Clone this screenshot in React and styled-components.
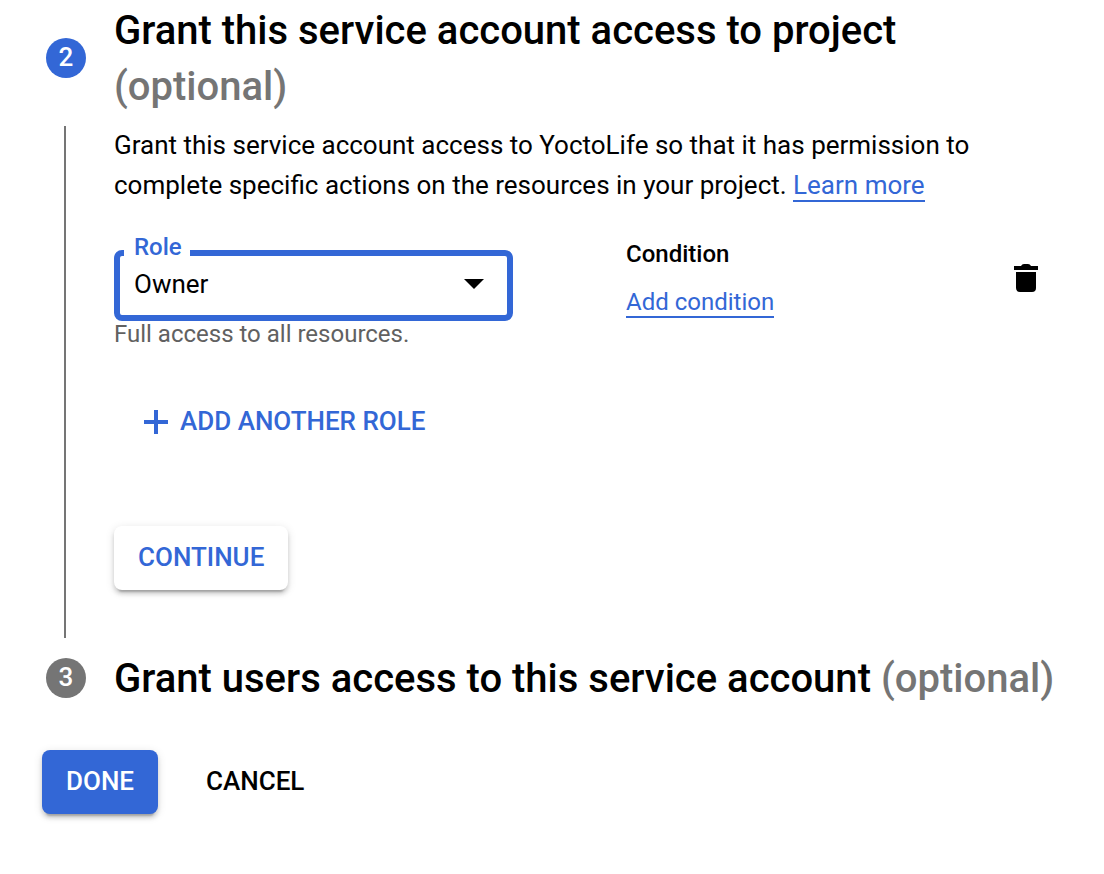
import React, { useState } from 'react';
import styled, { createGlobalStyle } from 'styled-components';

const App = () => {
  const [role, setRole] = useState('Owner')

  return (
    <>
      <GlobalStyle />
      <Wrapper>
        <Step>
          <Rail>
            <StepNumber $active>2</StepNumber>
            <RailLine />
          </Rail>
          <StepBody>
            <Title>
              Grant this service account access to project <Optional>(optional)</Optional>
            </Title>
            <Description>
              Grant this service account access to YoctoLife so that it has permission to
              complete specific actions on the resources in your project. <Link href="#learn">Learn more</Link>
            </Description>

            <RoleRow>
              <RoleField>
                <SelectBox>
                  <SelectLabel htmlFor="role">Role</SelectLabel>
                  <Select id="role" value={role} onChange={(e) => setRole(e.target.value)}>
                    <option>Owner</option>
                    <option>Editor</option>
                    <option>Viewer</option>
                  </Select>
                  <Arrow viewBox="0 0 20 10" aria-hidden="true">
                    <path d="M0 0h20L10 10z" />
                  </Arrow>
                </SelectBox>
                <Hint>Full access to all resources.</Hint>
              </RoleField>
              <Condition>
                <ConditionTitle>Condition</ConditionTitle>
                <Link href="#condition" $small>Add condition</Link>
              </Condition>
              <DeleteButton type="button" aria-label="Delete role">
                <svg width="24" height="28" viewBox="0 0 24 28" aria-hidden="true">
                  <path d="M0 2h7q1-2 3-2h4q2 0 3 2h7v4H0zM2 8h20v16a4 4 0 0 1-4 4H6a4 4 0 0 1-4-4z" />
                </svg>
              </DeleteButton>
            </RoleRow>

            <AddButton type="button">
              <svg width="24" height="24" viewBox="0 0 24 24" aria-hidden="true">
                <path d="M10 0h4v10h10v4H14v10h-4V14H0v-4h10z" />
              </svg>
              ADD ANOTHER ROLE
            </AddButton>

            <ContinueButton type="button">CONTINUE</ContinueButton>
          </StepBody>
        </Step>

        <Step>
          <Rail $last>
            <StepNumber>3</StepNumber>
          </Rail>
          <StepBody>
            <Title>
              Grant users access to this service account <Optional>(optional)</Optional>
            </Title>
          </StepBody>
        </Step>

        <Actions>
          <DoneButton type="button">DONE</DoneButton>
          <CancelButton type="button">CANCEL</CancelButton>
        </Actions>
      </Wrapper>
    </>
  )
}

export default App


const GlobalStyle = createGlobalStyle`
  * {
    box-sizing: border-box;
  }
  body {
    margin: 0;
    background: #ffffff;
    color: #000000;
    font-family: Roboto, "Liberation Sans", sans-serif;
  }
`
const Wrapper = styled.main`
  padding: 3px 32px 60px 42px;
`
const Step = styled.section`
  display: flex;
`
const Rail = styled.div`
  display: flex;
  flex: none;
  flex-direction: column;
  align-items: center;
  width: 48px;
  margin-right: 24px;
  padding-top: ${props => props.$last ? '7px' : '35px'};
`
const StepNumber = styled.div`
  display: flex;
  align-items: center;
  justify-content: center;
  width: 40px;
  height: 40px;
  padding-bottom: 2px;
  border-radius: 50%;
  background: ${props => props.$active ? '#3367d6' : '#757575'};
  color: #ffffff;
  font-size: 26px;
  font-weight: 500;
`
const RailLine = styled.div`
  flex: 1;
  width: 2px;
  margin: 48px 2px 13px 0;
  background: #757575;
`
const StepBody = styled.div`
  flex: 1;
  min-width: 0;
`
const Title = styled.h2`
  margin: 0;
  font-size: 40px;
  font-weight: 500;
  line-height: 56px;
`
const Optional = styled.span`
  color: #757575;
`
const Description = styled.p`
  margin: 10px 0 0;
  font-size: 26px;
  line-height: 40px;
`
const Link = styled.a`
  border-bottom: 2px solid #3367d6;
  color: #3367d6;
  font-size: ${props => props.$small ? '24px' : '26px'};
  line-height: 28px;
  text-decoration: none;
`
const RoleRow = styled.div`
  display: flex;
  align-items: flex-start;
  margin-top: 45px;
`
const RoleField = styled.div`
  width: 399px;
`
const SelectBox = styled.div`
  position: relative;
`
const SelectLabel = styled.label`
  position: absolute;
  top: -17px;
  left: 10px;
  padding: 0 8px 0 10px;
  background: #ffffff;
  color: #3367d6;
  font-size: 24px;
  font-weight: 500;
  line-height: 28px;
`
const Select = styled.select`
  display: block;
  width: 100%;
  height: 71px;
  padding: 0 14px 4px;
  border: 6px solid #3367d6;
  border-radius: 8px;
  outline: none;
  appearance: none;
  background: #ffffff;
  color: #000000;
  font-family: inherit;
  font-size: 26px;
`
const Arrow = styled.svg`
  position: absolute;
  top: 29px;
  right: 29px;
  width: 20px;
  height: 10px;
  pointer-events: none;
`
const Hint = styled.div`
  color: #616161;
  font-size: 24px;
  line-height: 26px;
`
const Condition = styled.div`
  display: flex;
  flex-direction: column;
  align-items: flex-start;
  gap: 20px;
  margin-left: 113px;
  margin-top: -10px;
`
const ConditionTitle = styled.div`
  font-size: 24px;
  font-weight: 500;
  line-height: 28px;
`
const DeleteButton = styled.button`
  margin: 14px 34px 0 auto;
  padding: 0;
  border: 0;
  background: none;
  line-height: 0;
  cursor: pointer;
`
const Button = styled.button`
  display: inline-flex;
  align-items: center;
  height: 64px;
  padding: 0 24px 2px;
  border: 0;
  border-radius: 8px;
  background: none;
  color: #3367d6;
  font-family: inherit;
  font-size: 26px;
  font-weight: 500;
  cursor: pointer;
`
const AddButton = styled(Button)`
  display: flex;
  gap: 12px;
  margin: 43px 0 0 6px;

  & svg {
    margin-top: 2px;
    fill: #3367d6;
  }
`
const RaisedButton = styled(Button)`
  box-shadow: 0 6px 2px -4px rgba(0,0,0,.2), 0 4px 4px 0 rgba(0,0,0,.14), 0 2px 10px 0 rgba(0,0,0,.12);
`
const ContinueButton = styled(RaisedButton)`
  margin: 72px 0 61px;
  background: #ffffff;
`
const Actions = styled.div`
  display: flex;
  gap: 24px;
  margin-top: 43px;
`
const DoneButton = styled(RaisedButton)`
  background: #3367d6;
  color: #ffffff;
`
const CancelButton = styled(Button)`
  color: #000000;
`
